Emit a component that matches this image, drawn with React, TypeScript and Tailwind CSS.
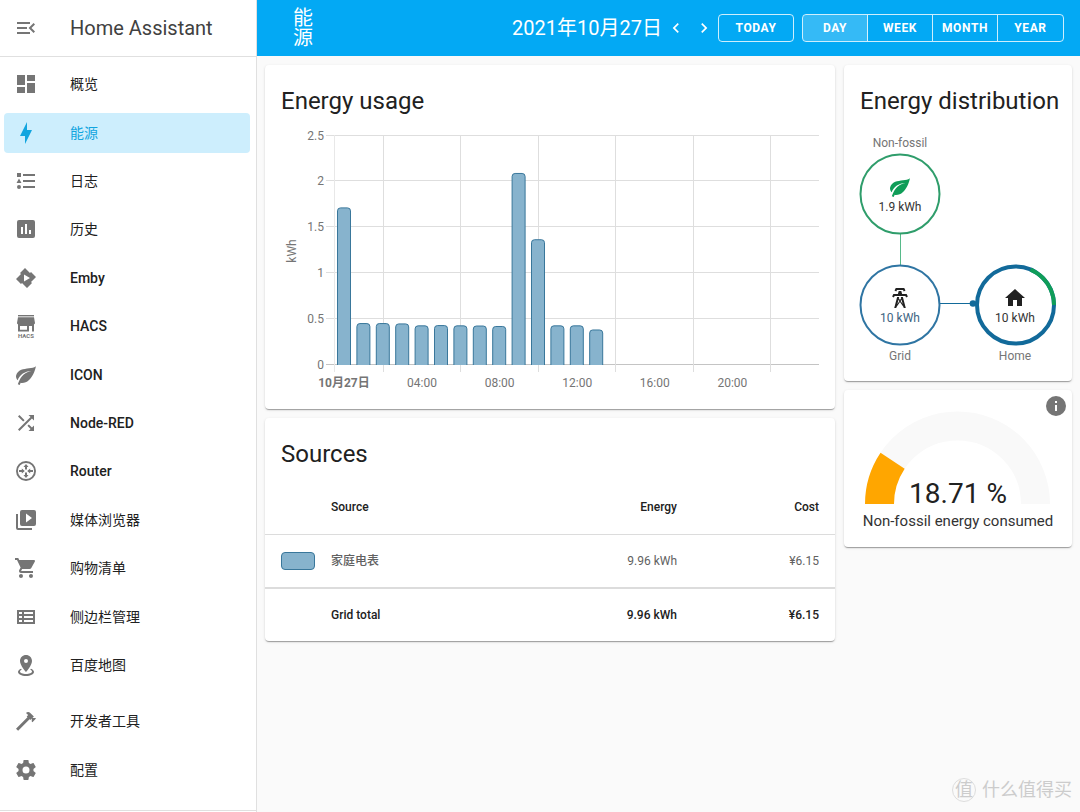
import React from "react";

const ICONS = {
  menu: "M21,15.61L19.59,17L14.58,12L19.59,7L21,8.39L17.44,12L21,15.61M3,6H16V8H3V6M3,13V11H13V13H3M3,18V16H16V18H3Z",
  dashboard: "M13,3V9H21V3M13,21H21V11H13M3,21H11V15H3M3,13H11V3H3V13Z",
  bolt: "M11 15H6L13 1V9H18L11 23V15Z",
  list: "M5,9.5L7.5,14H2.5L5,9.5M3,4H7V8H3V4M5,20A2,2 0 0,0 7,18A2,2 0 0,0 5,16A2,2 0 0,0 3,18A2,2 0 0,0 5,20M9,5V7H21V5H9M9,19H21V17H9V19M9,13H21V11H9V13Z",
  chart: "M9,17H7V10H9V17M13,17H11V7H13V17M17,17H15V13H17V17M19,3H5A2,2 0 0,0 3,5V19A2,2 0 0,0 5,21H19A2,2 0 0,0 21,19V5A2,2 0 0,0 19,3Z",
  emby: "M11,2L6,7L7,8L2,13L7,18L8,17L13,22L18,17L17,16L22,11L17,6L16,7L11,2M10,8.5L16,12L10,15.5V8.5Z",
  leaf: "M17,8C8,10 5.9,16.17 3.82,21.34L5.71,22L6.66,19.7C7.14,19.87 7.64,20 8,20C19,20 22,3 22,3C21,5 14,5.25 9,6.25C4,7.25 2,11.5 2,13.5C2,15.5 3.75,17.25 3.75,17.25C7,8 17,8 17,8Z",
  shuffle: "M14.83,13.41L13.42,14.82L16.55,17.95L14.5,20H20V14.5L17.96,16.54L14.83,13.41M14.5,4L16.54,6.04L4,18.59L5.41,20L17.96,7.46L20,9.5V4M10.59,9.17L5.41,4L4,5.41L9.17,10.58L10.59,9.17Z",
  router: "M12,2A10,10 0 1,0 12,22A10,10 0 1,0 12,2M12,3.9A8.1,8.1 0 1,1 12,20.1A8.1,8.1 0 1,1 12,3.9M12,5L14.5,8H13V10.6H11V8H9.5L12,5M12,19L9.5,16H11V13.4H13V16H14.5L12,19M10.8,12L7.8,14.4V13H5V11H7.8V9.6L10.8,12M13.2,12L16.2,9.6V11H19V13H16.2V14.4L13.2,12Z",
  media: "M4,6H2V20A2,2 0 0,0 4,22H18V20H4V6M20,2H8A2,2 0 0,0 6,4V16A2,2 0 0,0 8,18H20A2,2 0 0,0 22,16V4A2,2 0 0,0 20,2M12,14.5V5.5L18,10L12,14.5Z",
  cart: "M17,18A2,2 0 0,1 19,20A2,2 0 0,1 17,22C15.89,22 15,21.1 15,20C15,18.89 15.89,18 17,18M1,2H4.27L5.21,4H20A1,1 0 0,1 21,5C21,5.17 20.95,5.34 20.88,5.5L17.3,11.97C16.96,12.58 16.3,13 15.55,13H8.1L7.2,14.63L7.17,14.75A0.25,0.25 0 0,0 7.42,15H19V17H7C5.89,17 5,16.1 5,15C5,14.65 5.09,14.32 5.24,14.04L6.6,11.59L3,4H1V2M7,18A2,2 0 0,1 9,20A2,2 0 0,1 7,22C5.89,22 5,21.1 5,20C5,18.89 5.89,18 7,18Z",
  table: "M3,5H21V19H3V5M5,7V9H8V7H5M10,7V9H19V7H10M5,11V13H8V11H5M10,11V13H19V11H10M5,15V17H8V15H5M10,15V17H19V15H10Z",
  marker: "M12,2C15.31,2 18,4.66 18,7.95C18,12.41 12,19 12,19C12,19 6,12.41 6,7.95C6,4.66 8.69,2 12,2M12,6A2,2 0 0,0 10,8A2,2 0 0,0 12,10A2,2 0 0,0 14,8A2,2 0 0,0 12,6M20,19C20,21.21 16.42,23 12,23C7.58,23 4,21.21 4,19C4,17.71 5.22,16.56 7.11,15.83L7.75,16.74C6.67,17.19 6,17.81 6,18.5C6,19.88 8.69,21 12,21C15.31,21 18,19.88 18,18.5C18,17.81 17.33,17.19 16.25,16.74L16.89,15.83C18.78,16.56 20,17.71 20,19Z",
  hammer: "M2,19.63L13.43,8.2L12.72,7.5L14.14,6.07L12,3.89C13.2,2.7 15.09,2.7 16.27,3.89L19.87,7.5L18.45,8.91H21.29L22,9.62L18.45,13.21L17.74,12.5V9.62L16.27,11.04L15.56,10.33L4.13,21.76L2,19.63Z",
  cog: "M12,15.5A3.5,3.5 0 0,1 8.5,12A3.5,3.5 0 0,1 12,8.5A3.5,3.5 0 0,1 15.5,12A3.5,3.5 0 0,1 12,15.5M19.43,12.97C19.47,12.65 19.5,12.33 19.5,12C19.5,11.67 19.47,11.34 19.43,11L21.54,9.37C21.73,9.22 21.78,8.95 21.66,8.73L19.66,5.27C19.54,5.05 19.27,4.96 19.05,5.05L16.56,6.05C16.04,5.66 15.5,5.32 14.87,5.07L14.5,2.42C14.46,2.18 14.25,2 14,2H10C9.75,2 9.54,2.18 9.5,2.42L9.13,5.07C8.5,5.32 7.96,5.66 7.44,6.05L4.95,5.05C4.73,4.96 4.46,5.05 4.34,5.27L2.34,8.73C2.21,8.95 2.27,9.22 2.46,9.37L4.57,11C4.53,11.34 4.5,11.67 4.5,12C4.5,12.33 4.53,12.65 4.57,12.97L2.46,14.63C2.27,14.78 2.21,15.05 2.34,15.27L4.34,18.73C4.46,18.95 4.73,19.03 4.95,18.95L7.44,17.94C7.96,18.34 8.5,18.68 9.13,18.93L9.5,21.58C9.54,21.82 9.75,22 10,22H14C14.25,22 14.46,21.82 14.5,21.58L14.87,18.93C15.5,18.67 16.04,18.34 16.56,17.94L19.05,18.95C19.27,19.03 19.54,18.95 19.66,18.73L21.66,15.27C21.78,15.05 21.73,14.78 21.54,14.63L19.43,12.97Z",
  left: "M15.41,16.58L10.83,12L15.41,7.41L14,6L8,12L14,18L15.41,16.58Z",
  right: "M8.59,16.58L13.17,12L8.59,7.41L10,6L16,12L10,18L8.59,16.58Z",
  tower: "M8.28,5.45L6.5,4.55L7.76,2H16.23L17.5,4.55L15.72,5.44L15,4H9L8.28,5.45M18.62,8H14.09L13.3,5H10.7L9.91,8H5.38L4.1,10.55L5.89,11.44L6.62,10H17.38L18.1,11.45L19.89,10.56L18.62,8M17.77,22H15.7L15.46,21.1L12,15.9L8.53,21.1L8.3,22H6.23L9.12,11H11.19L10.83,12.35L12,14.1L13.16,12.35L12.81,11H14.88L17.77,22M11.4,15L10.5,13.65L9.32,18.13L11.4,15M14.68,18.12L13.5,13.64L12.6,15L14.68,18.12Z",
  home: "M10,20V14H14V20H19V12H22L12,3L2,12H5V20H10Z",
  info: "M13,9H11V7H13V9M13,17H11V11H13V17M12,2A10,10 0 0,0 2,12A10,10 0 0,0 12,22A10,10 0 0,0 22,12A10,10 0 0,0 12,2Z",
};

type IconName = keyof typeof ICONS;

const Icon: React.FC<{ name: IconName; className?: string }> = ({ name, className = "size-6" }) => (
  <svg viewBox="0 0 24 24" className={className} fill="currentColor" fillRule="evenodd" aria-hidden="true">
    <path d={ICONS[name]} />
  </svg>
);

const HacsIcon: React.FC = () => (
  <svg viewBox="0 0 24 24" className="size-6 overflow-visible" fill="currentColor" aria-hidden="true">
    <path d="M4 1H20V2.4H4Z" />
    <path d="M4 3.2H20L21 9C21 10.4 19.5 10.8 18.4 10C17 11 15 11 14 10C13 10.9 11 10.9 10 10C9 11 7 11 5.7 10C4.5 10.8 3 10.4 3 9Z" />
    <path fillRule="evenodd" d="M4 10H20V17.5H18V12H15V17.5H4V10M6 12V15.8H13V12H6Z" />
    <text x="12" y="24" fontSize="6" fontWeight="700" textAnchor="middle">HACS</text>
  </svg>
);

type NavItem = { label: string; icon: IconName | "hacs"; active?: boolean };

const mainItems: NavItem[] = [
  { label: "概览", icon: "dashboard" },
  { label: "能源", icon: "bolt", active: true },
  { label: "日志", icon: "list" },
  { label: "历史", icon: "chart" },
  { label: "Emby", icon: "emby" },
  { label: "HACS", icon: "hacs" },
  { label: "ICON", icon: "leaf" },
  { label: "Node-RED", icon: "shuffle" },
  { label: "Router", icon: "router" },
  { label: "媒体浏览器", icon: "media" },
  { label: "购物清单", icon: "cart" },
  { label: "侧边栏管理", icon: "table" },
  { label: "百度地图", icon: "marker" },
];

const bottomItems: NavItem[] = [
  { label: "开发者工具", icon: "hammer" },
  { label: "配置", icon: "cog" },
];

// Chinese labels stay at normal weight, Latin ones are medium
const isLatin = (label: string) => /^[A-Za-z]/.test(label);

const NavRow: React.FC<{ item: NavItem }> = ({ item }) => (
  <li className="flex flex-1 items-center pl-1 pr-1.5">
    <a
      href="#"
      aria-current={item.active ? "page" : undefined}
      className={
        item.active
          ? "flex h-10 w-full items-center gap-8 rounded bg-[#cdeefd] pl-2.5 text-sm text-[#12a5df]"
          : "flex h-10 w-full items-center gap-8 rounded pl-2.5 text-sm text-[#212121]"
      }
    >
      <span className={item.active ? "text-[#12a5df]" : "text-[#757575]"}>
        {item.icon === "hacs" ? <HacsIcon /> : <Icon name={item.icon} />}
      </span>
      <span className={isLatin(item.label) ? "font-medium" : "font-normal"}>{item.label}</span>
    </a>
  </li>
);

const Sidebar: React.FC = () => (
  <aside className="flex h-screen w-[257px] shrink-0 flex-col border-r border-[#e0e0e0] bg-white pb-px">
    <div className="flex h-[57px] shrink-0 items-center gap-8 border-b border-[#e0e0e0] pl-3.5">
      <button type="button" aria-label="Sidebar toggle" className="text-[#757575]">
        <Icon name="menu" />
      </button>
      <span className="text-xl text-[#414141]">Home Assistant</span>
    </div>
    <nav className="flex flex-1 flex-col gap-2 border-b border-[#e0e0e0] pb-4 pt-[3px]">
      <ul className="flex flex-[13] flex-col">
        {mainItems.map((item) => (
          <NavRow key={item.label} item={item} />
        ))}
      </ul>
      <ul className="flex flex-[2] flex-col">
        {bottomItems.map((item) => (
          <NavRow key={item.label} item={item} />
        ))}
      </ul>
    </nav>
  </aside>
);

const periods = ["DAY", "WEEK", "MONTH", "YEAR"];

const Header: React.FC = () => (
  <header className="flex h-14 items-center justify-between bg-[#03a9f4] pl-9 pr-4 text-white">
    <h1 className="w-5 text-xl leading-5">能源</h1>
    <div className="flex items-center">
      <span className="text-xl">2021年10月27日</span>
      <button type="button" aria-label="Previous" className="mx-1">
        <Icon name="left" className="size-5" />
      </button>
      <button type="button" aria-label="Next" className="mx-1">
        <Icon name="right" className="size-5" />
      </button>
      <button type="button" className="h-7 w-[76px] rounded border border-white/80 text-xs font-bold tracking-wider">
        TODAY
      </button>
      <div className="ml-2 flex h-7 divide-x divide-white/80 overflow-hidden rounded border border-white/80">
        {periods.map((p) => (
          <button
            key={p}
            type="button"
            aria-pressed={p === "DAY"}
            className={
              p === "DAY"
                ? "w-[65px] bg-white/20 text-xs font-bold tracking-wider"
                : "w-[65px] text-xs font-bold tracking-wider"
            }
          >
            {p}
          </button>
        ))}
      </div>
    </div>
  </header>
);

const Card: React.FC<{ className?: string; children: React.ReactNode }> = ({ className = "", children }) => (
  <section
    className={`rounded bg-white shadow-[0_2px_1px_-1px_rgba(0,0,0,0.2),0_1px_1px_0_rgba(0,0,0,0.14),0_1px_3px_0_rgba(0,0,0,0.12)] ${className}`}
  >
    {children}
  </section>
);

const usage = [1.717, 0.457, 0.457, 0.453, 0.432, 0.435, 0.432, 0.43, 0.425, 2.092, 1.37, 0.432, 0.432, 0.387];
const yTicks = [0, 0.5, 1, 1.5, 2, 2.5];
const xLabels = ["04:00", "08:00", "12:00", "16:00", "20:00"];

const CHART_LEFT = 53;
const CHART_BOTTOM = 240;
const HOUR = 19.4;
const UNIT = 91.8;

const UsageChart: React.FC = () => (
  <svg viewBox="0 0 538 270" className="w-full" role="img" aria-label="Energy usage">
    {yTicks.map((v) => {
      const y = Math.round(CHART_BOTTOM - v * UNIT) - 0.5;
      return (
        <g key={v}>
          <line x1={CHART_LEFT - 8} x2={538} y1={y} y2={y} stroke={v === 0 ? "#c4c4c4" : "#dedede"} />
          <text x={43} y={y + 4} textAnchor="end" fontSize="12" fill="#757575">
            {v}
          </text>
        </g>
      );
    })}
    <line x1={53.5} x2={53.5} y1={10} y2={247} stroke="#e8e8e8" />
    {[2, 6, 10, 14, 18, 22].map((h) => {
      const x = Math.round(CHART_LEFT + (h + 0.5) * HOUR) + 0.5;
      return <line key={h} x1={x} x2={x} y1={10} y2={247} stroke="#dedede" />;
    })}
    {usage.map((v, i) => {
      const x = CHART_LEFT + 3.5 + i * HOUR;
      const y = CHART_BOTTOM - v * UNIT + 0.5;
      return (
        <path
          key={i}
          d={`M${x} ${CHART_BOTTOM}V${y + 3}Q${x} ${y} ${x + 3} ${y}H${x + 10}Q${x + 13} ${y} ${x + 13} ${y + 3}V${CHART_BOTTOM}`}
          fill="#87b3cd"
          stroke="#39779b"
        />
      );
    })}
    <text x={63} y={262} textAnchor="middle" fontSize="12" fontWeight="700" fill="#757575">
      10月27日
    </text>
    {xLabels.map((label, i) => (
      <text key={label} x={141 + i * 4 * HOUR} y={262} textAnchor="middle" fontSize="12" fill="#757575">
        {label}
      </text>
    ))}
    <text transform="translate(15 126) rotate(-90)" textAnchor="middle" fontSize="12" fill="#757575">
      kWh
    </text>
  </svg>
);

const SourcesTable: React.FC = () => (
  <table className="w-full text-xs text-[#212121]">
    <thead>
      <tr className="h-[54px]">
        <th className="w-[66px]" aria-label="Color"></th>
        <th className="text-left font-medium">Source</th>
        <th className="text-right font-medium">Energy</th>
        <th className="w-[158px] pr-4 text-right font-medium">Cost</th>
      </tr>
    </thead>
    <tbody>
      <tr className="h-[54px] border-t border-[#dcdcdc] text-[#616161]">
        <td className="pl-4">
          <div className="h-[18px] w-[34px] rounded border border-[#39779b] bg-[#87b3cd]" />
        </td>
        <th className="text-left font-medium">家庭电表</th>
        <td className="text-right">9.96 kWh</td>
        <td className="pr-4 text-right">¥6.15</td>
      </tr>
      <tr className="h-[53px] border-t-2 border-[#dcdcdc] font-medium">
        <td></td>
        <th className="text-left font-medium">Grid total</th>
        <td className="text-right">9.96 kWh</td>
        <td className="pr-4 text-right">¥6.15</td>
      </tr>
    </tbody>
  </table>
);

const Distribution: React.FC = () => (
  <svg viewBox="0 0 228 250" className="w-full" role="img" aria-label="Energy distribution">
    <line x1="56.5" x2="56.5" y1="103" y2="135" stroke="#0f9d58" strokeOpacity="0.7" />
    <line x1="96" x2="132" y1="172.5" y2="172.5" stroke="#126a9a" />
    <circle cx="129" cy="172.5" r="3.3" fill="#126a9a" />

    <g fontSize="12" textAnchor="middle" fill="#757575">
      <text x="56" y="16">Non-fossil</text>
      <text x="56" y="229">Grid</text>
      <text x="171" y="229">Home</text>
    </g>

    <circle cx="56" cy="63" r="39.5" fill="white" stroke="#2f9d6b" strokeWidth="2" />
    <circle cx="56" cy="174" r="39.5" fill="white" stroke="#2f75a3" strokeWidth="2" />
    <circle cx="171.5" cy="174" r="38.5" fill="white" stroke="#126a9a" strokeWidth="4" />
    <path d="M186.5 138.6A38.5 38.5 0 0 1 210 174" fill="none" stroke="#0f9d58" strokeWidth="4" />

    <g fontSize="12" textAnchor="middle" fill="#333333">
      <text x="56" y="80">1.9 kWh</text>
      <text x="56" y="191" fill="#3d6482">10 kWh</text>
      <text x="171" y="191">10 kWh</text>
    </g>
    <g fill="#212121">
      <path transform="translate(44 44)" d={ICONS.leaf} fill="#0f9d58" />
      <path transform="translate(44 155)" d={ICONS.tower} />
      <path transform="translate(159 155)" d={ICONS.home} />
    </g>
  </svg>
);

const Gauge: React.FC = () => (
  <svg viewBox="0 0 228 157" className="w-full" role="img" aria-label="18.71 %">
    <path d="M35.5 114A78 78 0 0 1 191.5 114" fill="none" stroke="#f9f9f9" strokeWidth="29" />
    <path d="M35.5 114A78 78 0 0 1 48.6 70.7" fill="none" stroke="#ffa600" strokeWidth="29" />
    <text x="114" y="113" fontSize="28" textAnchor="middle" fill="#212121">
      18.71 %
    </text>
    <text x="114" y="136" fontSize="15" textAnchor="middle" fill="#333333">
      Non-fossil energy consumed
    </text>
  </svg>
);

const App: React.FC = () => (
  <div className="flex min-h-screen bg-[#fafafa] font-['Roboto','Noto_Sans_CJK_SC',sans-serif]">
    <Sidebar />
    <div className="relative min-w-0 flex-1">
      <Header />
      <main className="grid grid-cols-[minmax(0,5fr)_minmax(0,2fr)] items-start gap-[9px] px-2 py-[9px]">
        <div className="flex flex-col gap-[9px]">
          <Card className="px-4 pb-3.5 pt-5">
            <h2 className="mb-2 text-2xl text-[#212121]">Energy usage</h2>
            <UsageChart />
          </Card>
          <Card>
            <h2 className="px-4 pb-2.5 pt-5 text-2xl text-[#212121]">Sources</h2>
            <SourcesTable />
          </Card>
        </div>
        <div className="flex flex-col gap-[9px]">
          <Card>
            <h2 className="whitespace-nowrap pb-3.5 pl-4 pt-5 text-2xl text-[#212121]">Energy distribution</h2>
            <Distribution />
          </Card>
          <Card className="relative">
            <Gauge />
            <button type="button" aria-label="Information" className="absolute right-1 top-1 text-[#757575]">
              <Icon name="info" />
            </button>
          </Card>
        </div>
      </main>
      <div className="absolute bottom-2 right-2 flex items-center gap-1.5 text-lg text-[#cccccc]">
        <span className="flex size-6 items-center justify-center rounded-full border border-[#dddddd]">值</span>
        什么值得买
      </div>
    </div>
  </div>
);

export default App;
